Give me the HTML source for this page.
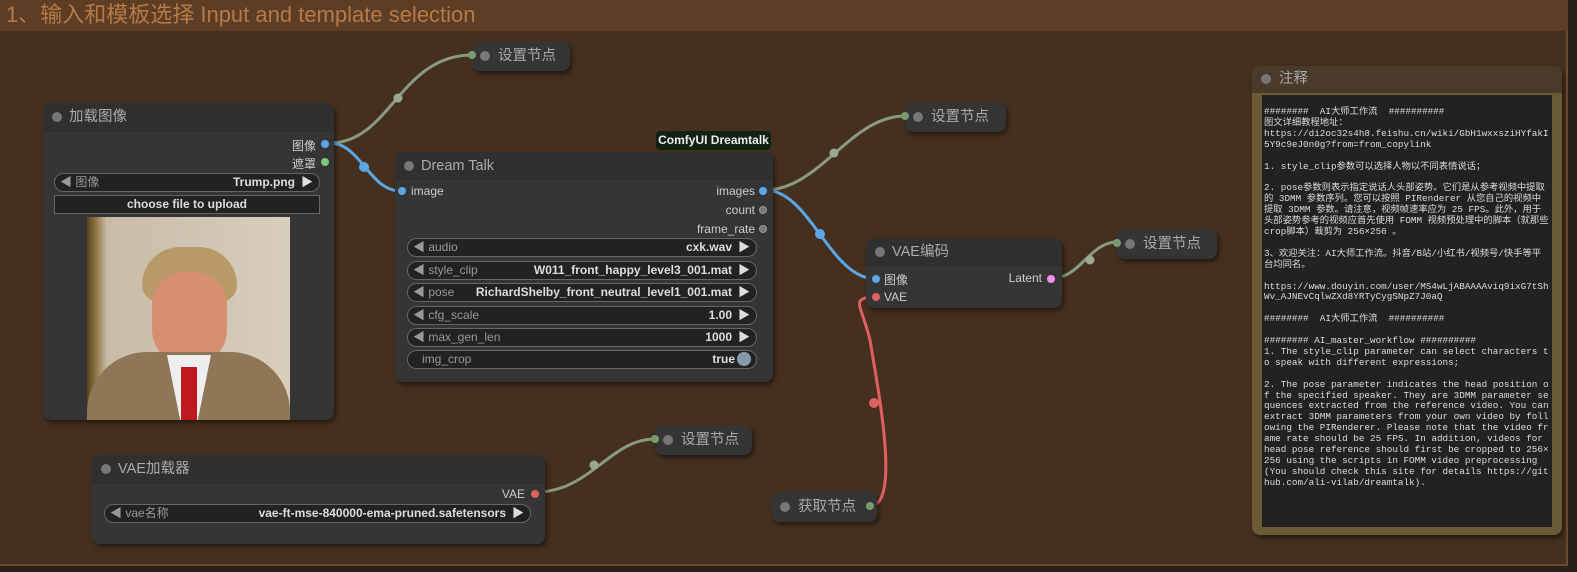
<!DOCTYPE html>
<html><head><meta charset="utf-8"><style>
*{box-sizing:border-box;margin:0;padding:0}
body{width:1577px;height:572px;overflow:hidden;background:#2a2018;font-family:"Liberation Sans","Noto Sans CJK SC",sans-serif;position:relative}
.grp{position:absolute;left:0;top:0;width:1568px;height:566px;background:#45301f;border-right:2px solid #6a4a30;border-bottom:2px solid #6a4a30}
.gt{position:absolute;left:0;top:0;width:1568px;height:31px;background:#5e3d25;color:#b57a48;font-size:22px;padding:1px 6px;line-height:28px}
.node{position:absolute;background:#353535;border-radius:8px;box-shadow:2px 3px 4px rgba(0,0,0,.45)}
.hd{height:28px;border-bottom:1px solid #2c2c2c;color:#aaa;font-size:14.5px;line-height:28px;padding-left:26px;position:relative;background:#303030;border-radius:8px 8px 0 0}
.hd:before{content:"";position:absolute;left:9px;top:9px;width:10px;height:10px;border-radius:50%;background:#777}
.pill{position:absolute;height:30px;background:#353535;border-radius:8px;color:#aaa;font-size:14.5px;line-height:30px;padding-left:26px;box-shadow:2px 3px 4px rgba(0,0,0,.45)}
.pill:before{content:"";position:absolute;left:8px;top:10px;width:10px;height:10px;border-radius:50%;background:#777}
.lbl{position:absolute;color:#ccc;font-size:12px}
.dot{position:absolute;width:8px;height:8px;border-radius:50%}
.w{position:absolute;height:19px;background:#222;border:1px solid #666;border-radius:10px;font-size:12px;line-height:17px;color:#999}
.w .l{position:absolute;left:5px}
.w .r{position:absolute;right:24px;color:#ddd;font-weight:bold}
.w .a{position:absolute;right:6px;color:#ddd}
.note{position:absolute;left:1262px;top:95px;width:290px;height:432px;background:#222;color:#ddd;font-family:"Liberation Mono","Noto Sans CJK SC",monospace;font-size:9.3px;line-height:10.9px;padding:12px 2px;white-space:pre-wrap;word-break:break-all}
</style></head><body>
<div class="grp"><div class="gt">1、输入和模板选择 Input and template selection</div></div>

<svg style="position:absolute;left:0;top:0" width="1577" height="572">
<g fill="none" stroke-width="3">
<path d="M330 143 C 390 143, 400 55, 472 55" stroke="#8a9a80"/>
<path d="M330 143 C 360 143, 370 191, 400 191" stroke="#5aa7e8"/>
<path d="M765 190 C 820 190, 850 116, 905 116" stroke="#8a9a80"/>
<path d="M765 190 C 810 190, 830 279, 876 279" stroke="#5aa7e8"/>
<path d="M1053 278 C 1080 278, 1090 242, 1117 242" stroke="#8a9a80"/>
<path d="M870 506 C 900 506, 880 400, 870 340 C 860 300, 850 300, 876 296" stroke="#e06060"/>
<path d="M536 492 C 590 492, 610 439, 655 439" stroke="#8a9a80"/>
</g>
<g>
<circle cx="398" cy="98" r="4.5" fill="#9aaa90"/><circle cx="364" cy="167" r="5" fill="#5aa7e8"/>
<circle cx="834" cy="153" r="4.5" fill="#9aaa90"/><circle cx="820" cy="234" r="5" fill="#5aa7e8"/>
<circle cx="1090" cy="260" r="4.5" fill="#9aaa90"/><circle cx="874" cy="403" r="5" fill="#e06060"/>
<circle cx="594" cy="465" r="4.5" fill="#9aaa90"/>
</g>
</svg>

<div class="node" style="left:43px;top:103px;width:291px;height:317px">
<div class="hd">加载图像</div>
<div class="lbl" style="right:18px;top:34px">图像</div><div class="dot" style="right:5px;top:37px;background:#5aa7e8"></div>
<div class="lbl" style="right:18px;top:52px">遮罩</div><div class="dot" style="right:5px;top:55px;background:#7cc87c"></div>
<div class="w" style="left:11px;top:70px;width:266px"><span class="l">◀ 图像</span><span class="r">Trump.png</span><span class="a">▶</span></div>
<div style="position:absolute;left:11px;top:92px;width:266px;height:19px;background:#222;border:1px solid #666;color:#ddd;font-size:12px;font-weight:bold;text-align:center;line-height:17px">choose file to upload</div>
<div style="position:absolute;left:44px;top:114px;width:203px;height:203px;background:linear-gradient(90deg,#5a4520 0,#8a7040 8px,#c8bca8 20px,#d8cebc 100%);overflow:hidden">
 <div style="position:absolute;left:55px;top:30px;width:95px;height:55px;border-radius:45px 45px 20px 20px;background:#b89a68"></div>
 <div style="position:absolute;left:65px;top:55px;width:75px;height:95px;border-radius:35px 35px 40px 40px;background:#d69070"></div>
 <div style="position:absolute;left:0;top:135px;width:203px;height:70px;border-radius:60px 60px 0 0;background:#8e7656"></div>
 <div style="position:absolute;left:80px;top:138px;width:44px;height:65px;background:#eee;clip-path:polygon(0 0,100% 0,70% 100%,30% 100%)"></div>
 <div style="position:absolute;left:94px;top:150px;width:16px;height:55px;background:#c01820"></div>
</div>
</div>

<div class="pill" style="left:472px;top:41px;width:98px">设置节点</div>
<div class="dot" style="left:468px;top:51px;background:#7a9a70"></div>

<div style="position:absolute;left:656px;top:131px;width:115px;height:19px;background:#122212;border-radius:4px;color:#eee;font-size:12px;font-weight:bold;text-align:center;line-height:19px">ComfyUI Dreamtalk</div>
<div class="node" style="left:395px;top:152px;width:378px;height:230px">
<div class="hd">Dream Talk</div>
<div class="dot" style="left:3px;top:35px;background:#5aa7e8"></div><div class="lbl" style="left:16px;top:32px">image</div>
<div class="lbl" style="right:18px;top:32px">images</div><div class="dot" style="right:6px;top:35px;background:#5aa7e8"></div>
<div class="lbl" style="right:18px;top:51px">count</div><div class="dot" style="right:6px;top:54px;background:#777;border:1px solid #999"></div>
<div class="lbl" style="right:18px;top:70px">frame_rate</div><div class="dot" style="right:6px;top:73px;background:#777;border:1px solid #999"></div>
<div class="w" style="left:12px;top:86px;width:350px"><span class="l">◀ audio</span><span class="r">cxk.wav</span><span class="a">▶</span></div>
<div class="w" style="left:12px;top:109px;width:350px"><span class="l">◀ style_clip</span><span class="r">W011_front_happy_level3_001.mat</span><span class="a">▶</span></div>
<div class="w" style="left:12px;top:131px;width:350px"><span class="l">◀ pose</span><span class="r">RichardShelby_front_neutral_level1_001.mat</span><span class="a">▶</span></div>
<div class="w" style="left:12px;top:154px;width:350px"><span class="l">◀ cfg_scale</span><span class="r">1.00</span><span class="a">▶</span></div>
<div class="w" style="left:12px;top:176px;width:350px"><span class="l">◀ max_gen_len</span><span class="r">1000</span><span class="a">▶</span></div>
<div class="w" style="left:12px;top:198px;width:350px"><span class="l" style="left:14px">img_crop</span><span class="r" style="right:21px">true</span><span style="position:absolute;right:5px;top:1px;width:14px;height:14px;border-radius:50%;background:#8a9aaa"></span></div>
</div>

<div class="pill" style="left:905px;top:102px;width:101px">设置节点</div>
<div class="dot" style="left:901px;top:112px;background:#7a9a70"></div>

<div class="node" style="left:866px;top:238px;width:196px;height:70px">
<div class="hd">VAE编码</div>
<div class="dot" style="left:6px;top:37px;background:#5aa7e8"></div><div class="lbl" style="left:18px;top:33px">图像</div>
<div class="dot" style="left:6px;top:55px;background:#e06060"></div><div class="lbl" style="left:18px;top:52px">VAE</div>
<div class="lbl" style="right:20px;top:33px">Latent</div><div class="dot" style="right:7px;top:37px;background:#f090f0"></div>
</div>

<div class="pill" style="left:1117px;top:229px;width:100px">设置节点</div>
<div class="dot" style="left:1113px;top:239px;background:#7a9a70"></div>

<div class="pill" style="left:772px;top:492px;width:105px">获取节点</div>
<div class="dot" style="left:866px;top:502px;background:#7a9a70"></div>

<div class="node" style="left:92px;top:455px;width:453px;height:89px">
<div class="hd">VAE加载器</div>
<div class="lbl" style="right:20px;top:32px">VAE</div><div class="dot" style="right:6px;top:35px;background:#e06060"></div>
<div class="w" style="left:12px;top:49px;width:427px"><span class="l">◀ vae名称</span><span class="r">vae-ft-mse-840000-ema-pruned.safetensors</span><span class="a">▶</span></div>
</div>

<div class="pill" style="left:655px;top:425px;width:97px">设置节点</div>
<div class="dot" style="left:651px;top:435px;background:#7a9a70"></div>

<div style="position:absolute;left:1252px;top:66px;width:310px;height:469px;background:#6b5a36;border-radius:8px;box-shadow:2px 3px 4px rgba(0,0,0,.45)">
<div style="height:27px;background:#4a3a2a;border-radius:8px 8px 0 0;color:#aaa;font-size:14.5px;line-height:27px;padding-left:27px;position:relative">注释<span style="position:absolute;left:9px;top:8px;width:10px;height:10px;border-radius:50%;background:#777"></span></div>
</div>
<div class="note">########  AI大师工作流  ##########
图文详细教程地址：
https://di2oc32s4h8.feishu.cn/wiki/GbH1wxxsziHYfakI5Y9c9eJ0n0g?from=from_copylink

1. style_clip参数可以选择人物以不同表情说话；

2. pose参数则表示指定说话人头部姿势。它们是从参考视频中提取的 3DMM 参数序列。您可以按照 PIRenderer 从您自己的视频中提取 3DMM 参数。请注意，视频帧速率应为 25 FPS。此外，用于头部姿势参考的视频应首先使用 FOMM 视频预处理中的脚本（就那些crop脚本）裁剪为 256×256 。

3、欢迎关注：AI大师工作流。抖音/B站/小红书/视频号/快手等平台均同名。

https://www.douyin.com/user/MS4wLjABAAAAviq9ixG7tShWv_AJNEvCqlwZXd8YRTyCygSNpZ7J0aQ

########  AI大师工作流  ##########

######## AI_master_workflow ##########
1. The style_clip parameter can select characters to speak with different expressions;

2. The pose parameter indicates the head position of the specified speaker. They are 3DMM parameter sequences extracted from the reference video. You can extract 3DMM parameters from your own video by following the PIRenderer. Please note that the video frame rate should be 25 FPS. In addition, videos for head pose reference should first be cropped to 256×256 using the scripts in FOMM video preprocessing (You should check this site for details https://github.com/ali-vilab/dreamtalk).</div>
</body></html>
